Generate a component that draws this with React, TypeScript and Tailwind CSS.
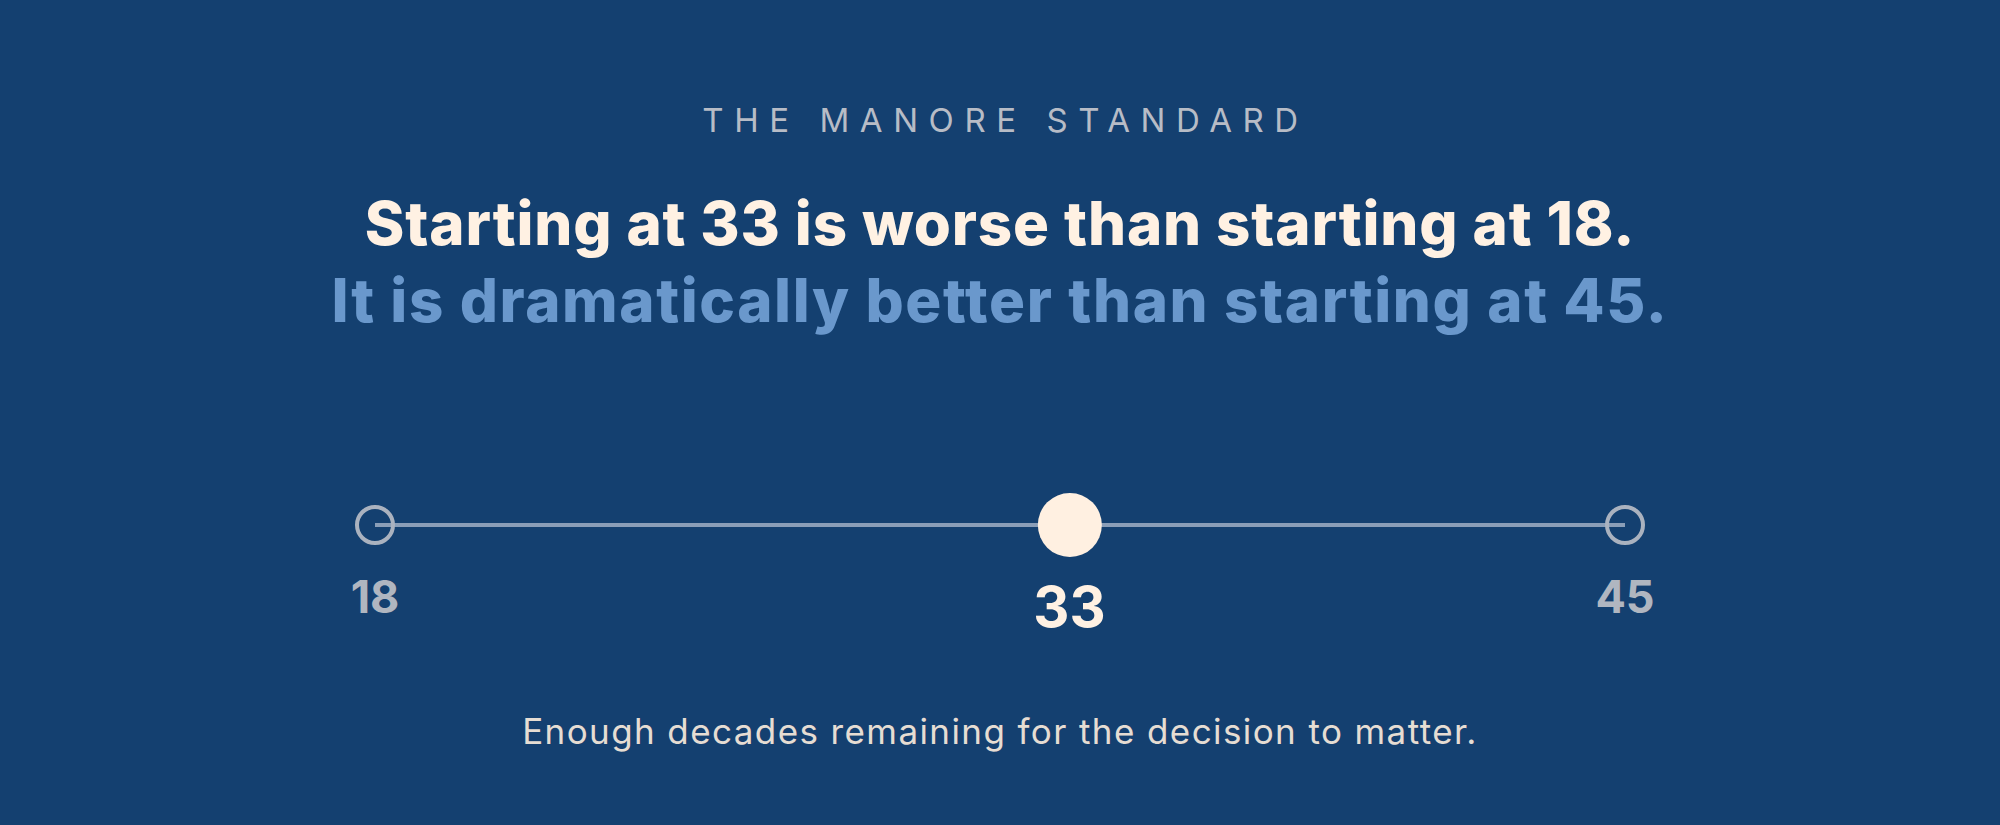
import React from "react";

const markers = [
  { v: 18, active: false },
  { v: 33, active: true },
  { v: 45, active: false },
];

export default function App() {
  const min = 18;
  const max = 45;
  return (
    <div
      className="w-full h-[825px] bg-[#144070] flex flex-col items-center overflow-hidden"
      style={{ fontFamily: "Inter, 'Noto Sans', sans-serif" }}
    >
      <div className="pt-[100px] pl-[11px] text-[33px] leading-[40px] tracking-[0.32em] text-[#b7bcc6] font-normal">
        THE MANORE STANDARD
      </div>
      <h1 className="mt-[45px] text-center text-[60px] leading-[77px] font-extrabold">
        <span className="block tracking-[0.85px] text-[#fff1e3]">Starting at 33 is worse than starting at 18.</span>
        <span className="block tracking-[1.6px] text-[#6a98cc]">It is dramatically better than starting at 45.</span>
      </h1>
      <div className="relative mt-[154px] w-[1250px] h-[142px]">
        <div className="absolute left-0 right-0 top-[30px] h-[4px] bg-[#8a9eb8]" />
        {markers.map((m) => {
          const pct = ((m.v - min) / (max - min)) * 100;
          return (
            <div
              key={m.v}
              className="absolute top-0 flex flex-col items-center -translate-x-1/2"
              style={{ left: `${pct}%` }}
            >
              <div className="h-[64px] w-[64px] flex items-center justify-center">
                {m.active ? (
                  <div className="h-[64px] w-[64px] rounded-full bg-[#fff0e1]" />
                ) : (
                  <div className="h-[40px] w-[40px] rounded-full border-[4px] border-[#aab2bf]" />
                )}
              </div>
              {m.active ? (
                <div className="mt-[22px] text-[56px] leading-[56px] font-bold text-[#fff1e3]">{m.v}</div>
              ) : (
                <div className="mt-[17px] text-[45px] leading-[45px] font-bold text-[#b0b6c0]">{m.v}</div>
              )}
            </div>
          );
        })}
      </div>
      <p className="mt-[74px] text-[35px] leading-[44px] tracking-[1.4px] text-[#e6ddd3]">
        Enough decades remaining for the decision to matter.
      </p>
    </div>
  );
}
